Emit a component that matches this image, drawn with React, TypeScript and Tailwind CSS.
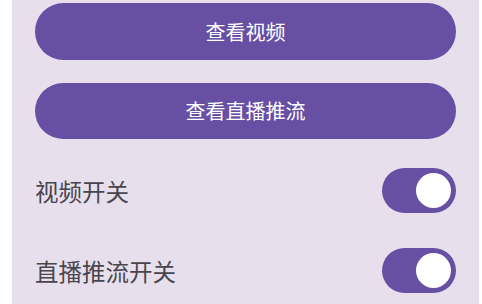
import React, { useState } from "react"

const font = { fontFamily: '"Noto Sans CJK SC", "Noto Sans", sans-serif' }

function Toggle({ on, onChange }: { on: boolean; onChange: () => void }) {
  return (
    <button
      onClick={onChange}
      className={`flex h-[45px] w-[74px] items-center rounded-full px-[5px] ${on ? "justify-end bg-[#6750a4]" : "justify-start bg-[#e7e0ec] border-2 border-[#79747e]"}`}
    >
      <span className="block h-[35px] w-[35px] rounded-full bg-white" />
    </button>
  )
}

export default function App() {
  const [video, setVideo] = useState(true)
  const [live, setLive] = useState(true)

  return (
    <div className="flex h-[304px] w-[482px] overflow-hidden bg-white" style={font}>
      <div className="w-[12px] shrink-0" />
      <div className="flex w-[467px] flex-col bg-[#e7e0ec] px-[23px] pt-[3px]">
        <button className="h-[57px] w-full rounded-full bg-[#6750a4] text-[20px] text-white">
          查看视频
        </button>
        <button className="mt-[23px] h-[56px] w-full rounded-full bg-[#6750a4] text-[20px] text-white">
          查看直播推流
        </button>

        <div className="mt-[29px] flex h-[45px] items-center justify-between">
          <span className="pt-[2px] text-[23.5px] text-[#49454f]">视频开关</span>
          <Toggle on={video} onChange={() => setVideo(!video)} />
        </div>
        <div className="mt-[35px] flex h-[45px] items-center justify-between">
          <span className="pt-[2px] text-[23.5px] text-[#49454f]">直播推流开关</span>
          <Toggle on={live} onChange={() => setLive(!live)} />
        </div>
      </div>
    </div>
  )
}
